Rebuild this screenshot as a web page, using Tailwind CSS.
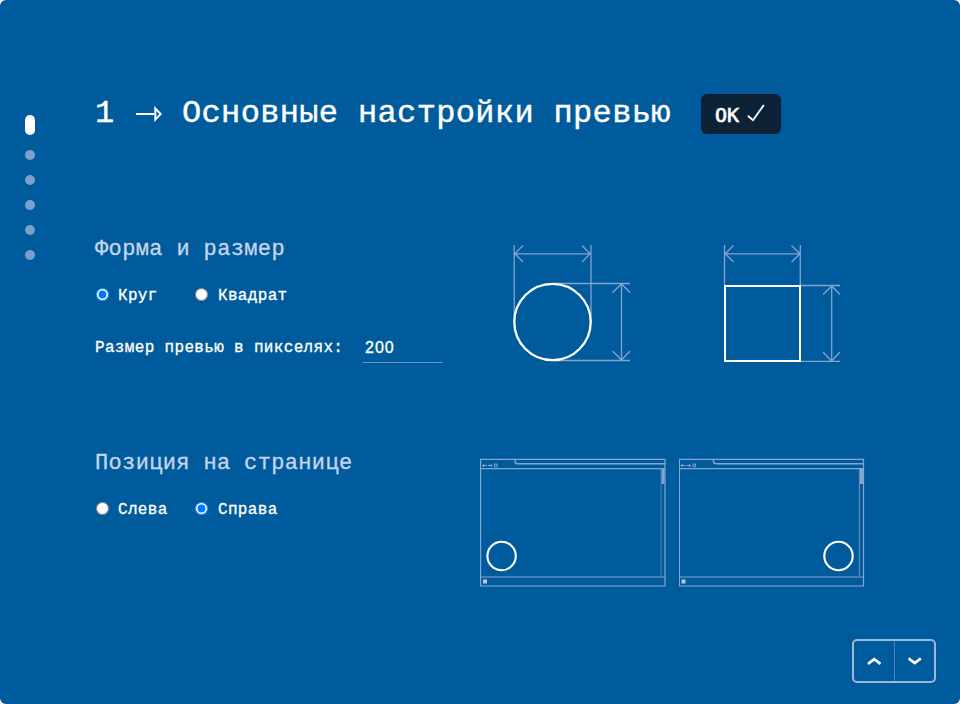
<!DOCTYPE html>
<html lang="ru">
<head>
<meta charset="utf-8">
<title>Основные настройки превью</title>
<script src="https://cdn.jsdelivr.net/npm/@tailwindcss/browser@4"></script>
</head>
<body class="bg-white">
<main class="relative flex h-[704px] w-[960px] overflow-hidden rounded-[6px] bg-[#005b9c] font-['Liberation_Mono',monospace] text-white">
  <nav class="flex w-[95px] shrink-0 flex-col gap-[15px] pt-[115px] pl-[25px]">
    <a class="h-5 w-2.5 rounded-full bg-white"></a>
    <a class="size-2.5 rounded-full bg-[#7d9fcc]"></a>
    <a class="size-2.5 rounded-full bg-[#7d9fcc]"></a>
    <a class="size-2.5 rounded-full bg-[#7d9fcc]"></a>
    <a class="size-2.5 rounded-full bg-[#7d9fcc]"></a>
    <a class="size-2.5 rounded-full bg-[#7d9fcc]"></a>
  </nav>
  <div class="flex flex-1 flex-col pt-[94px]">
    <header class="flex h-10 items-center">
      <h1 class="flex h-10 w-[606px] shrink-0 items-center text-[32px] leading-10 tracking-[0.35px] whitespace-pre [-webkit-text-stroke:0.4px_#fff]">
        <span class="w-[41px]">1</span>
        <svg class="mr-[20px] h-4 w-[26px]" viewBox="0 0 26 16" fill="none" stroke="#fff" stroke-width="2"><path d="M0 8H18M19.3 2.4V13.6L24.7 8Z"/></svg>
        <span>Основные настройки превью</span>
      </h1>
      <button class="flex h-10 w-20 items-center gap-2 rounded-[6px] bg-[#0d2237] pl-[14px] text-xl">
        <span class="mt-px w-6 font-['DejaVu_Sans_Mono',monospace] [-webkit-text-stroke:0.7px_#fff]">OK</span>
        <svg class="-mt-[2px] h-[18px] w-[18px]" viewBox="0 0 18 18" fill="none" stroke="#fff" stroke-width="1.9"><path d="M.8 11.8L6 16.2L16.8 1"/></svg>
      </button>
    </header>

    <section class="mt-[102px] flex h-[214px]">
      <div class="w-[385px] shrink-0">
        <h2 class="h-7 text-[22px] leading-7 tracking-[0.37px] text-[#c5d5ec] [-webkit-text-stroke:0.3px_#c5d5ec]">Форма и размер</h2>
        <div class="mt-[22px] flex h-5 text-base leading-5 tracking-[0.33px] [-webkit-text-stroke:0.3px_#fff]">
          <label class="flex w-[99px]"><input type="radio" name="shape" checked class="mt-[2px] mr-[9px] ml-[1px] size-[13px]">Круг</label>
          <label class="flex"><input type="radio" name="shape" class="mt-[2px] mr-[10px] ml-[1px] size-[13px]">Квадрат</label>
        </div>
        <div class="mt-[28px] flex h-[29px] text-base leading-[29px] tracking-[0.33px] [-webkit-text-stroke:0.3px_#fff]">
          <label class="w-[268px] leading-[27px]" for="size"><span class="inline-block pt-px">Размер превью в пикселях:</span></label>
          <input id="size" value="200" class="h-[29px] w-20 border-b border-[#6f94c4] bg-transparent px-[2px] font-['Liberation_Sans',sans-serif] leading-[27px] tracking-[1px]">
        </div>
      </div>
      <div class="flex gap-[76px] pt-[4px] pl-[28px]">
        <svg class="h-[130px] w-[134px]" viewBox="508 240 134 130" fill="none">
          <g stroke="#82a2cf" stroke-width="1.3"><path d="M514.2 245V322M591 245V322M515 253.8H590M523 245.5L515 253.8L523 262M582 245.5L590 253.8L582 262"/><path d="M553 283.5H630M553 360.5H630M621.5 284V360M612.5 292.5L621.5 284L630 292.5M612.5 351L621.5 360L630 351"/></g>
          <circle cx="552.5" cy="322" r="38.2" stroke="#fff" stroke-width="2.3"/>
        </svg>
        <svg class="h-[130px] w-[134px]" viewBox="718 240 134 130" fill="none">
          <g stroke="#82a2cf" stroke-width="1.3"><path d="M724.5 245V285M800.3 245V285M725 253.8H800M733.5 245.5L725.3 253.8L733.5 262M791.5 245.5L800 253.8L791.5 262"/><path d="M801 285.5H840M801 361.3H840M831.7 286V361M823 294.5L831.7 286L840 294.5M823 352L831.7 361L840 352"/></g>
          <path d="M725 286H800V361H725Z" stroke="#fff" stroke-width="2"/>
        </svg>
      </div>
    </section>

    <section class="flex h-[149px]">
      <div class="w-[385px] shrink-0">
        <h2 class="h-7 text-[22px] leading-7 tracking-[0.35px] text-[#c5d5ec] [-webkit-text-stroke:0.3px_#c5d5ec]">Позиция на странице</h2>
        <div class="mt-[22px] flex h-5 text-base leading-5 tracking-[0.33px] [-webkit-text-stroke:0.3px_#fff]">
          <label class="flex w-[99px]"><input type="radio" name="pos" class="mt-[2px] mr-[9px] ml-[1px] size-[13px]">Слева</label>
          <label class="flex"><input type="radio" name="pos" checked class="mt-[2px] mr-[10px] ml-[1px] size-[13px]">Справа</label>
        </div>
      </div>
      <div class="flex gap-[13px] pt-[8px]">
        <svg class="h-[130px] w-[186px]" viewBox="0 0 186 130" fill="none">
          <g stroke="#85a5d0" stroke-width="1.2"><path d="M.6 1.4H185V128H.6ZM.5 10.6H185M.5 119H185"/><path d="M35 2V3.5Q35 5.7 38 5.7H185" stroke-width="1.4"/><path d="M181 11V118" opacity=".4"/><path d="M183 11V26" stroke-width="3"/><path d="M2.5 7.5H7M4 6L2.5 7.5L4 9M8 7.5H12M10.5 6L12 7.5L10.5 9M14.5 6H17V8.8H14.5Z" stroke-width="1"/></g>
          <path d="M3 121.5H7V125.5H3Z" fill="#b7cae3"/><circle cx="21.6" cy="98" r="14.2" stroke="#fff" stroke-width="2.1"/>
        </svg>
        <svg class="h-[130px] w-[186px]" viewBox="0 0 186 130" fill="none">
          <g stroke="#85a5d0" stroke-width="1.2"><path d="M.4 1.4H184.5V128H.4ZM.5 10.6H184.5M.5 119H184.5"/><path d="M34.5 2V3.5Q34.5 5.7 37.5 5.7H184.5" stroke-width="1.4"/><path d="M180.5 11V118" opacity=".7"/><path d="M182.5 11V26" stroke-width="3"/><path d="M2 7.5H6.5M3.5 6L2 7.5L3.5 9M7.5 7.5H11.5M10 6L11.5 7.5L10 9M14 6H16.5V8.8H14Z" stroke-width="1"/></g>
          <path d="M2.5 121.5H6.5V125.5H2.5Z" fill="#b7cae3"/><circle cx="159.5" cy="98" r="14.2" stroke="#fff" stroke-width="2.1"/>
        </svg>
      </div>
    </section>

    <div class="mt-[40px] mr-[24px] flex h-11 w-[84px] self-end rounded-[5px] border-2 border-[#9fb6d8]">
      <button class="flex w-[41px] items-center justify-center border-r border-[#4e80b7]"><svg class="h-2 w-[14px]" viewBox="0 0 14 8" fill="none" stroke="#fff" stroke-width="2.7"><path d="M1 6.8L7.2 2.2L13.4 6.8"/></svg></button>
      <button class="flex w-[39px] items-center justify-center"><svg class="h-2 w-[14px]" viewBox="0 0 14 8" fill="none" stroke="#fff" stroke-width="2.7"><path d="M.6 1.4L6.7 6L12.8 1.4"/></svg></button>
    </div>
  </div>
</main>
</body>
</html>
